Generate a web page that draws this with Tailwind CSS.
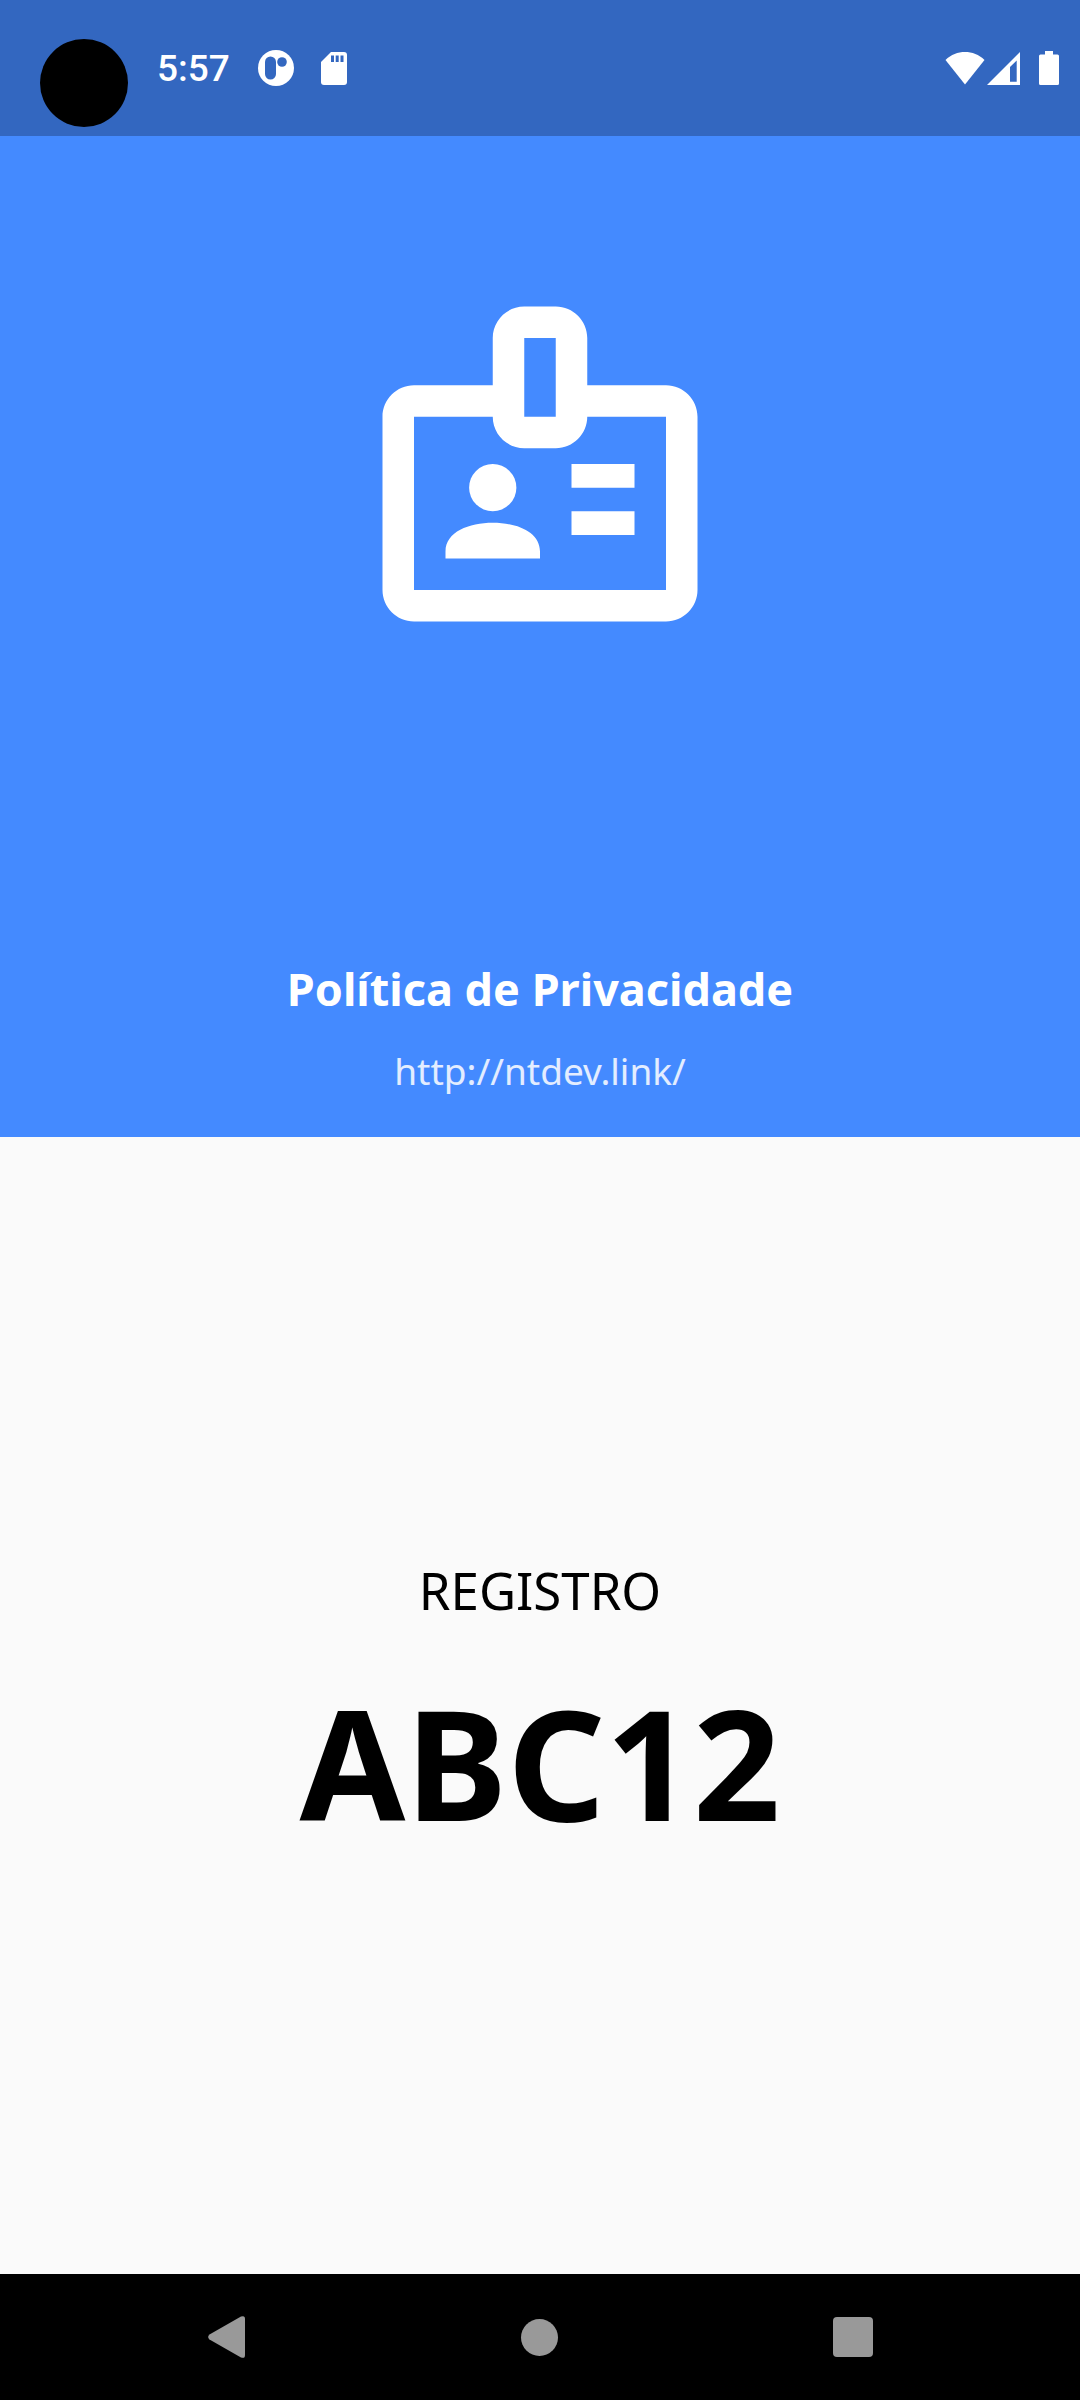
<!DOCTYPE html>
<html lang="pt-BR">
<head>
<meta charset="utf-8">
<meta name="viewport" content="width=device-width, initial-scale=1">
<title>Registro</title>
<script src="https://cdn.jsdelivr.net/npm/@tailwindcss/browser@4"></script>
</head>
<body class="flex min-h-screen flex-col bg-[#fafafa] font-['Noto_Sans',sans-serif] text-black">
  <div class="grid flex-1 grid-rows-2">
    <div class="flex flex-col bg-[#448aff] text-white">
      <header class="flex h-34 items-center justify-between bg-[#3367c0] pr-[21px] pl-10">
        <div class="flex items-center">
          <div class="mt-[30px] size-[88px] rounded-full bg-black"></div>
          <time class="ml-[29px] pt-0.5 font-['Roboto',sans-serif] text-[37px] leading-10 font-medium">5:57</time>
          <svg class="ml-7 size-9" viewBox="0 0 36 36" aria-hidden="true">
            <circle cx="18" cy="18" r="18" fill="white"/>
            <rect x="7" y="6.500" width="11" height="23" rx="5.500" fill="#3367c0"/>
            <circle cx="24" cy="12" r="4.800" fill="#3367c0"/>
          </svg>
          <svg class="ml-[27px] h-[33px] w-[26px]" viewBox="0 0 26 33" aria-hidden="true">
            <path fill="white" d="M10 0H23a3 3 0 0 1 3 3V30a3 3 0 0 1-3 3H3a3 3 0 0 1-3-3V10Z"/>
            <path fill="#3367c0" d="M10 3.500h3V10h-3zM14.700 3.500h3V10h-3zM19.500 3.500h3V10h-3z"/>
          </svg>
        </div>
        <div class="flex items-center">
          <svg class="h-[33px] w-10" viewBox="0 0 40 33" aria-hidden="true">
            <path fill="white" d="M0.500 8C6 2.500 13 0 20 0S34 2.500 39.500 8L20 32.500Z"/>
          </svg>
          <svg class="ml-0.5 size-[33px]" viewBox="0 0 33 33" aria-hidden="true">
            <path fill="white" fill-rule="evenodd" d="M33 0V33H0ZM29.700 8.500L23 15V29.800H29.700Z"/>
          </svg>
          <svg class="ml-[19px] h-[34px] w-5" viewBox="0 0 20 34" aria-hidden="true">
            <path fill="white" d="M6 0H14V3.500H18.500A1.500 1.500 0 0 1 20 5V32.500A1.500 1.500 0 0 1 18.500 34H1.500A1.500 1.500 0 0 1 0 32.500V5A1.500 1.500 0 0 1 1.500 3.500H6Z"/>
          </svg>
        </div>
      </header>
      <div class="flex flex-1 flex-col items-center justify-between pt-[139px] pb-9">
        <svg class="size-[378px]" viewBox="0 0 24 24" fill="white" aria-hidden="true">
          <path fill-rule="evenodd" d="M11 2h2c1.100 0 2 .9 2 2v3h5c1.100 0 2 .9 2 2v11c0 1.100-.9 2-2 2H4c-1.100 0-2-.9-2-2V9c0-1.100.9-2 2-2h5V4c0-1.100.9-2 2-2ZM11 4v5h2V4ZM4 9v11h16V9h-5c0 1.100-.9 2-2 2h-2c-1.100 0-2-.9-2-2Z"/>
          <circle cx="9" cy="13.500" r="1.500"/>
          <path d="M6 18v-.45c0-1.250 1.500-1.820 3-1.820s3 .57 3 1.820V18ZM14 12h4v1.500h-4ZM14 15h4v1.500h-4Z"/>
        </svg>
        <a href="http://ntdev.link/" class="flex flex-col items-center gap-5 text-center">
          <span class="text-[45px] leading-16 font-bold">Política de Privacidade</span>
          <span class="text-[37px] leading-[60px] text-white/85">http://ntdev.link/</span>
        </a>
      </div>
    </div>
    <main class="flex flex-col items-center justify-center gap-10 pt-2">
      <p class="text-[51px] leading-16">REGISTRO</p>
      <h1 class="text-[153px] leading-[200px] font-bold">ABC12</h1>
    </main>
  </div>
  <nav class="flex h-[126px] items-center justify-around bg-black px-[70px]" aria-label="Navegação">
    <button type="button" aria-label="Voltar" class="flex size-12 items-center justify-center">
      <svg class="h-[42px] w-[37px]" viewBox="0 0 37 42"><path fill="#999999" d="M1.500 18.500L33 0.600Q37-1 37 3V39Q37 43 33 41.400L1.500 23.500Q-1.200 21 1.500 18.500Z"/></svg>
    </button>
    <button type="button" aria-label="Início" class="flex size-12 items-center justify-center">
      <span class="size-[37px] rounded-full bg-[#999999]"></span>
    </button>
    <button type="button" aria-label="Recentes" class="flex size-12 items-center justify-center">
      <span class="size-10 rounded bg-[#999999]"></span>
    </button>
  </nav>
</body>
</html>
